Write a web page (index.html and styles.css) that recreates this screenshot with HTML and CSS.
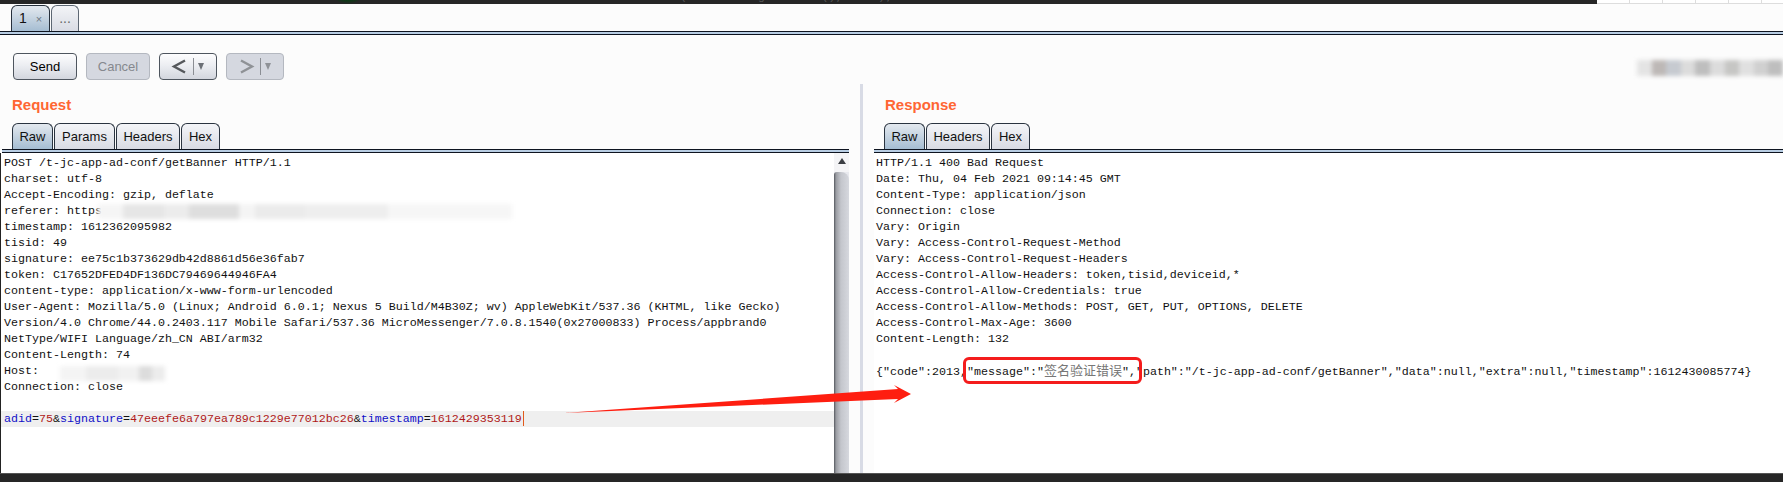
FILE: index.html
```html
<!DOCTYPE html>
<html lang="en">
<head>
<meta charset="utf-8">
<title>Repeater</title>
<link rel="stylesheet" href="styles.css">
</head>
<body>
<div class="topbar">
  <div class="topcode">stderr = new PrintWriter(callbacks.getStderr(), true);</div>
  <div class="topgrid"></div>
</div>
<div class="tabstrip">
  <div class="tab tab-num active">1 <span class="close">×</span></div>
  <div class="tab tab-more">...</div>
</div>
<div class="rule"></div>
<div class="toolbar">
  <button class="btn btn-text">Send</button>
  <button class="btn btn-text off">Cancel</button>
  <button class="btn btn-nav">
    <svg width="18" height="17" viewBox="0 0 18 17"><path d="M14 2.5 3 8.5 14 14.5" fill="none" stroke="#55585c" stroke-width="2.4"/></svg>
    <i class="sep"></i><i class="caret"></i>
  </button>
  <button class="btn btn-nav off">
    <svg width="18" height="17" viewBox="0 0 18 17"><path d="M3 2.5 14 8.5 3 14.5" fill="none" stroke="#8f9296" stroke-width="2.4"/></svg>
    <i class="sep"></i><i class="caret"></i>
  </button>
</div>
<div class="split">
  <section class="pane pane-req">
    <h2 class="title">Request</h2>
    <div class="subtabs">
      <div class="sub active w-raw">Raw</div>
      <div class="sub w-params">Params</div>
      <div class="sub w-headers">Headers</div>
      <div class="sub w-hex">Hex</div>
    </div>
    <div class="rule"></div>
    <div class="editor-row">
      <pre class="code">POST /t-jc-app-ad-conf/getBanner HTTP/1.1
charset: utf-8
Accept-Encoding: gzip, deflate
referer: https
timestamp: 1612362095982
tisid: 49
signature: ee75c1b373629db42d8861d56e36fab7
token: C17652DFED4DF136DC79469644946FA4
content-type: application/x-www-form-urlencoded
User-Agent: Mozilla/5.0 (Linux; Android 6.0.1; Nexus 5 Build/M4B30Z; wv) AppleWebKit/537.36 (KHTML, like Gecko)
Version/4.0 Chrome/44.0.2403.117 Mobile Safari/537.36 MicroMessenger/7.0.8.1540(0x27000833) Process/appbrand0
NetType/WIFI Language/zh_CN ABI/arm32
Content-Length: 74
Host:
Connection: close

<span class="hl"><b>adid</b>=<u>75</u>&amp;<b>signature</b>=<u>47eeefe6a797ea789c1229e77012bc26</u>&amp;<b>timestamp</b>=<u>1612429353119</u><em class="cursor"></em></span></pre>
      <div class="scrollbar"><div class="sb-up"></div><div class="sb-thumb"></div></div>
    </div>
  </section>
  <div class="gutter"><div class="divider"></div></div>
  <section class="pane pane-res">
    <h2 class="title">Response</h2>
    <div class="subtabs">
      <div class="sub active w-raw">Raw</div>
      <div class="sub w-headers">Headers</div>
      <div class="sub w-hex">Hex</div>
    </div>
    <div class="rule"></div>
    <div class="editor-row">
      <pre class="code">HTTP/1.1 400 Bad Request
Date: Thu, 04 Feb 2021 09:14:45 GMT
Content-Type: application/json
Connection: close
Vary: Origin
Vary: Access-Control-Request-Method
Vary: Access-Control-Request-Headers
Access-Control-Allow-Headers: token,tisid,deviceid,*
Access-Control-Allow-Credentials: true
Access-Control-Allow-Methods: POST, GET, PUT, OPTIONS, DELETE
Access-Control-Max-Age: 3600
Content-Length: 132

{"code":2013,"message":"<span class="cjk">签名验证错误</span>","path":"/t-jc-app-ad-conf/getBanner","data":null,"extra":null,"timestamp":1612430085774}</pre>
    </div>
  </section>
</div>
<div class="bottombar"></div>

<div class="smudge smudge-referer"></div>
<div class="smudge smudge-host"></div>
<div class="smudge smudge-top"></div>
<div class="redbox"></div>
<svg class="arrow" width="360" height="40" viewBox="560 380 360 40">
  <path d="M564 413 898 389 894 385 911 394 894 403 898 399Z" fill="#fe1e10"/>
</svg>
</body>
</html>
```
FILE: styles.css
```css
* { box-sizing: border-box; }
html, body { margin: 0; padding: 0; }
body {
  width: 1783px;
  height: 482px;
  overflow: hidden;
  position: relative;
  display: flex;
  flex-direction: column;
  background: #fcfcfc;
  font-family: "Liberation Sans", Arial, sans-serif;
  color: #111;
}
.topbar {
  height: 4px;
  flex: none;
  background: radial-gradient(ellipse 16px 10px at 348px -6px, #0b3a14 60%, transparent 100%), #262626;
  display: flex;
  justify-content: space-between;
  overflow: hidden;
}
.topcode {
  margin: -10px 0 0 510px;
  font: 11.8px/14px "Liberation Mono", monospace;
  color: #555;
  white-space: nowrap;
}
.topgrid {
  width: 186px;
  background: #fff repeating-linear-gradient(90deg, #fff 0 32px, #ddd 32px 33px);
  border-bottom: 1px solid #ddd;
}
.tabstrip {
  height: 27px;
  flex: none;
  display: flex;
  align-items: flex-end;
  gap: 1px;
  padding-left: 11px;
  padding-top: 1px;
}
.tab {
  height: 26px;
  border: 1px solid #5d6773;
  border-bottom: 0;
  border-radius: 6px 6px 0 0;
  background: linear-gradient(#f3f4f7, #d9dce4);
  font-size: 14px;
  line-height: 24px;
  text-align: center;
}
.tab-num { width: 39px; border-color: #26303c; }
.tab-more { width: 28px; color: #666; }
.active { background: linear-gradient(#e4e9ef, #a5bdd2); }
.close { color: #6d7780; font-size: 11px; margin-left: 5px; }
.rule {
  height: 4px;
  flex: none;
  background: #b8cde3;
  border-top: 1px solid #0e1420;
  border-bottom: 1px solid #0e1420;
}
.toolbar {
  height: 49px;
  flex: none;
  display: flex;
  align-items: flex-start;
  padding: 18px 0 0 13px;
  gap: 9px;
}
.btn {
  height: 27px;
  border: 1px solid #4e555e;
  border-radius: 4px;
  background: linear-gradient(#fdfdfe 0%, #eceef2 45%, #d3d6de 100%);
  font-family: "Liberation Sans", Arial, sans-serif;
  font-size: 13px;
  color: #000;
  padding: 0;
}
.btn-text { width: 64px; }
.btn-nav {
  width: 58px;
  display: flex;
  align-items: center;
  padding-left: 11px;
}
.off {
  background: #d5d8e0;
  border-color: #b4b8c0;
  color: #85888e;
}
.sep { width: 1px; height: 17px; background: #8b8e94; margin-left: 4px; }
.caret {
  margin-left: 4px;
  border-left: 3.5px solid transparent;
  border-right: 3.5px solid transparent;
  border-top: 7px solid #6b7076;
}
.off .caret { border-top-color: #8f9297; }
.split {
  flex: 1;
  min-height: 0;
  display: flex;
}
.pane { display: flex; flex-direction: column; min-width: 0; }
.pane-req { width: 849px; padding-left: 2px; border-left: 0; }
.pane-res { flex: 1; }
.title {
  margin: 0;
  height: 39px;
  font-size: 15px;
  font-weight: bold;
  line-height: 19px;
  padding-top: 11px;
  color: #ff6633;
}
.pane-req .title { padding-left: 10px; }
.pane-res .title { padding-left: 11px; }
.subtabs {
  height: 26px;
  flex: none;
  display: flex;
  gap: 1px;
}
.pane-req .subtabs { padding-left: 10px; }
.pane-res .subtabs { padding-left: 10px; }
.sub {
  height: 26px;
  border: 1px solid #2a3440;
  border-bottom: 0;
  border-radius: 6px 6px 0 0;
  background: linear-gradient(#f4f5f8, #d8dbe3);
  font-size: 13px;
  line-height: 26px;
  text-align: center;
}
.sub.active { background: linear-gradient(#e4e9ef, #a5bdd2); }
.w-raw { width: 41px; }
.w-params { width: 61px; }
.w-headers { width: 64px; }
.w-hex { width: 39px; }
.editor-row {
  flex: 1;
  min-height: 0;
  display: flex;
  background: #fff;
}
.code {
  flex: 1;
  min-width: 0;
  margin: 0;
  padding: 2px 0 0 2px;
  font-family: "Liberation Mono", "Noto Sans CJK SC", monospace;
  font-size: 11.67px;
  line-height: 16px;
  color: #111;
  white-space: pre;
  overflow: hidden;
}
.pane-req .editor-row { margin-left: -2px; }
.pane-req .code { border-left: 1px solid #222; padding-left: 3px; }
.pane-res .code { padding-left: 2px; }
.hl {
  display: block;
  background: #efefef;
  margin-left: -3px;
  padding-left: 3px;
}
.hl b { font-weight: normal; color: #1010c8; }
.hl u { text-decoration: none; color: #b01818; }
.cursor {
  display: inline-block;
  width: 1px;
  height: 15px;
  margin-left: 1px;
  vertical-align: top;
  background: #e25a1c;
}
.cjk {
  font-family: "Noto Sans CJK SC", sans-serif;
  font-size: 13px;
  line-height: 14px;
  color: #777;
}
.scrollbar {
  width: 15px;
  flex: none;
  display: flex;
  flex-direction: column;
  background: #e8e9ee;
}
.sb-up {
  height: 19px;
  flex: none;
  background: #f4f4f6;
  position: relative;
}
.sb-up::after {
  content: "";
  position: absolute;
  left: 4px;
  top: 5px;
  border-left: 4px solid transparent;
  border-right: 4px solid transparent;
  border-bottom: 6px solid #3a3d42;
}
.sb-thumb {
  flex: 1;
  border-top-left-radius: 3px;
  border-top-right-radius: 8px;
  background: linear-gradient(90deg, #55585e 0, #9a9ca2 2px, #c4c6cc 7px, #d6d8de 15px);
}
.gutter {
  width: 25px;
  flex: none;
  padding-left: 11px;
}
.divider {
  width: 3px;
  height: 100%;
  background: #d8dbe5;
}
.bottombar {
  height: 9px;
  flex: none;
  background: #262626;
  border-top: 1px solid #555;
}
.smudge {
  position: absolute;
  filter: blur(2px);
}
.smudge-referer {
  left: 98px;
  top: 204px;
  width: 414px;
  height: 15px;
  background: linear-gradient(90deg, #f5f5f5 0 6%, #e6e6e6 6% 16%, #ececec 16% 22%, #dedede 22% 34%, #f4f4f4 34% 38%, #ebebeb 38% 50%, #eeeeee 50% 70%, #f6f6f6 70% 100%);
}
.smudge-host {
  left: 60px;
  top: 366px;
  width: 105px;
  height: 15px;
  background: linear-gradient(90deg, #f4f4f4 0 25%, #ececec 25% 55%, #f1f1f1 55% 75%, #dcdcdc 75% 88%, #ececec 88% 100%);
}
.smudge-top {
  left: 1637px;
  top: 60px;
  width: 146px;
  height: 16px;
  background: linear-gradient(90deg, #e4e4e4 0 10%, #bdb8b6 10% 20%, #c6cad0 20% 30%, #dcdcdc 30% 40%, #bebebe 40% 50%, #dcdcdc 50% 60%, #c6c6c4 60% 70%, #e0e0e0 70% 80%, #d0d0d0 80% 90%, #bebebe 90% 100%);
}
.redbox {
  position: absolute;
  left: 963px;
  top: 357px;
  width: 179px;
  height: 27px;
  border: 3px solid #f41c1c;
  border-radius: 6px;
}
.arrow {
  position: absolute;
  left: 560px;
  top: 380px;
}
```
